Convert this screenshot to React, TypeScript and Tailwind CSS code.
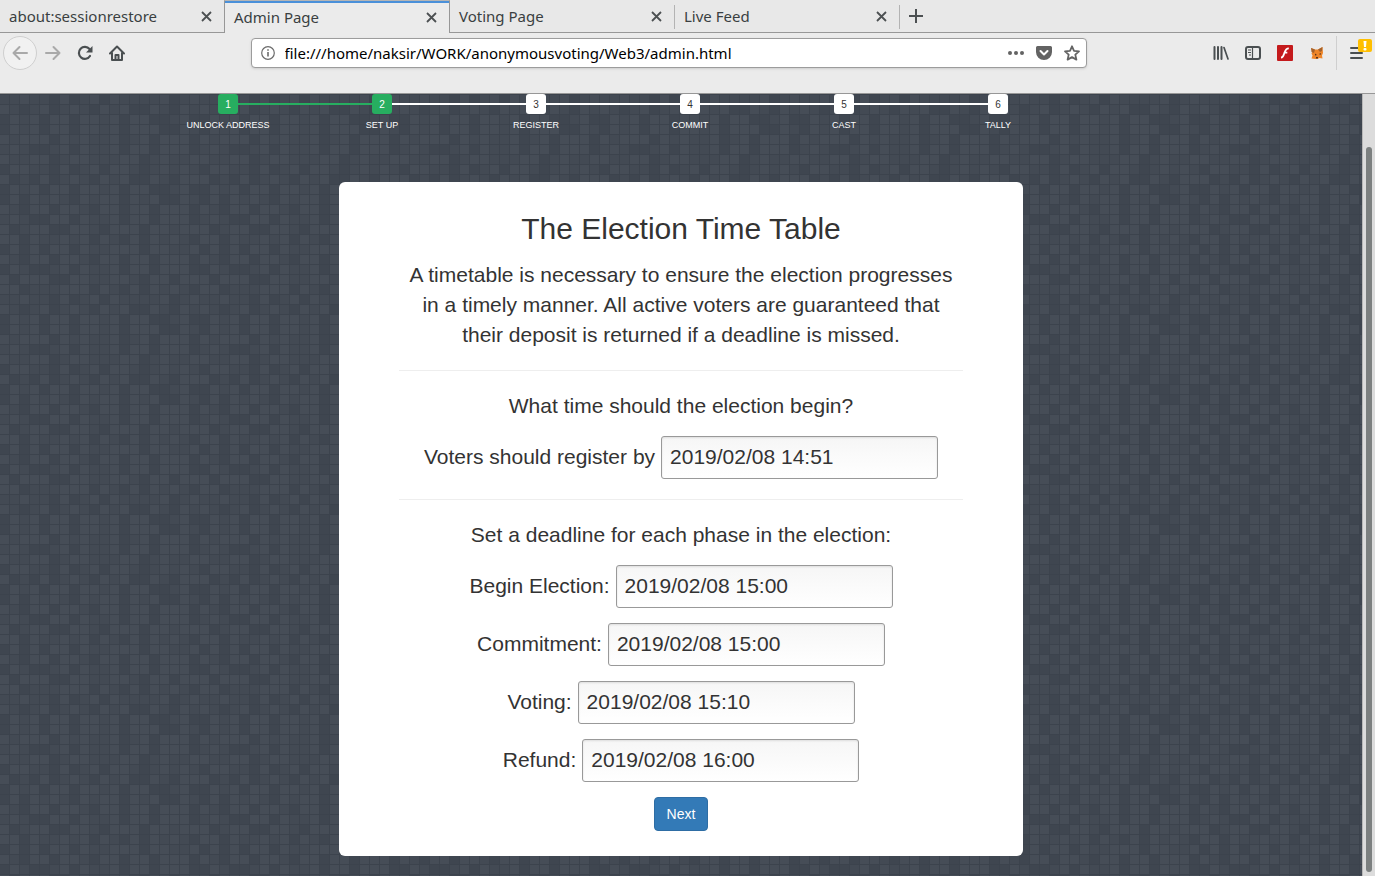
const FIELDS = [
  { id: "begin", label: "Begin Election:", value: "2019/02/08 15:00" },
  { id: "commitment", label: "Commitment:", value: "2019/02/08 15:00" },
  { id: "voting", label: "Voting:", value: "2019/02/08 15:10" },
  { id: "refund", label: "Refund:", value: "2019/02/08 16:00" },
];

const STEPS = ["Unlock Address", "Set Up", "Register", "Commit", "Cast", "Tally"];
const CURRENT_STEP = 2;

const TABS = ["about:sessionrestore", "Admin Page", "Voting Page", "Live Feed"];
const ACTIVE_TAB = 1;

// One character per 10px tile: "#" light, "+" middle, "." dark.
const MOSAIC = [
  "++#++.#.+#.#++++#.+#",
  "#+.+#.+#+.#+#..#+.#+",
  ".#+#.##.##+#.##..+#.",
  ".#+#.##.##+#.###..#+",
  "#+###.#+#++#.+#.###.",
  "+#+..+#.#++#.##.###.",
  "#++##.+##+++##.+#++#",
  ".##++.#.+#.##+.+#+#+",
  "#.+.#.+#+.#+#..#+.##",
  ".#+#.##.##+#.##..+#.",
  ".#.#+#+.#+##.#+#..#+",
  "#+.##.##+.##.##.###.",
  "+#+..##.#++#.##.###.",
  "#.+##..##+.###.##+##",
  "##.#++#+#.#+.#.#+#+.",
  ".#.#.##.#++###.##++#",
  "#+.##.##+.##.##.###.",
  ".#+..+#.#++#.##.###.",
  "#.###..##++##+.##.##",
  "##.+++###.#+.#.#+#+.",
];

const TILE_FILL: Record<string, string> = {
  "#": "#464d57",
  "+": "#434a54",
  ".": "#3f4650",
};

/** Full-bleed tile background, repeated every 200px. */
function Mosaic() {
  return (
    <svg className="absolute inset-0 h-full w-full" aria-hidden="true">
      <defs>
        <pattern id="mosaic" width="200" height="200" patternUnits="userSpaceOnUse">
          <rect width="200" height="200" fill="#3c434d" />
          {MOSAIC.map((row, y) =>
            row.split("").map((cell, x) => (
              <rect
                key={`${x}-${y}`}
                x={x * 10}
                y={y * 10 + 1}
                width="9"
                height="9"
                fill={TILE_FILL[cell]}
              />
            )),
          )}
        </pattern>
      </defs>
      <rect width="100%" height="100%" fill="url(#mosaic)" />
    </svg>
  );
}

function TabBar() {
  return (
    <div className="flex h-[33px] font-['Noto_Sans',sans-serif] text-[15px] text-[#3a3f41]">
      {TABS.map((tab, i) => (
        <div
          key={tab}
          className={
            i === ACTIVE_TAB
              ? "flex w-[226px] shrink-0 items-center border-x border-[#979797] border-t border-t-[#b5b5b5] bg-[#ebebeb] shadow-[inset_0_2px_0_#4a90d9]"
              : "flex w-[225px] shrink-0 items-center border-b border-b-[#979797] bg-[#e8e8e8] pt-px first:w-[224px]"
          }
        >
          <button type="button" className="flex-1 pl-[9px] text-left">
            {tab}
          </button>
          <button type="button" aria-label={`Close ${tab}`} className="mr-3">
            <svg width="11" height="11" viewBox="0 0 11 11">
              <path d="M1 1 10 10M10 1 1 10" stroke="#4c5052" strokeWidth="1.8" />
            </svg>
          </button>
          {i > ACTIVE_TAB && <span className="h-6 w-px bg-[#b3b3b3]" />}
        </div>
      ))}
      <div className="flex flex-1 items-center border-b border-b-[#979797] bg-[#e8e8e8] pl-[9px]">
        <button type="button" aria-label="New tab">
          <svg width="14" height="14" viewBox="0 0 14 14">
            <path d="M7 0v14M0 7h14" stroke="#4c5052" strokeWidth="2" />
          </svg>
        </button>
      </div>
    </div>
  );
}

function Toolbar() {
  return (
    <div className="flex h-[60px] items-start bg-[#ebebeb] pl-[3px] pt-[3px] text-[#4a4f51]">
      <div className="flex h-[34px] items-center">
        <button
          type="button"
          aria-label="Back"
          className="flex size-[34px] items-center justify-center rounded-full border border-[#cfcfcf] bg-[#f1f1f1] text-[#a9a9a9]"
        >
          <svg width="16" height="16" viewBox="0 0 16 16" fill="none" stroke="currentColor" strokeWidth="2" strokeLinecap="round" strokeLinejoin="round">
            <path d="M15 8H1.5M7.5 2l-6 6 6 6" />
          </svg>
        </button>
        <button type="button" aria-label="Forward" className="flex w-8 justify-center text-[#a9a9a9]">
          <svg width="16" height="16" viewBox="0 0 16 16" fill="none" stroke="currentColor" strokeWidth="2" strokeLinecap="round" strokeLinejoin="round">
            <path d="M1 8h13.5M8.5 2l6 6-6 6" />
          </svg>
        </button>
        <button type="button" aria-label="Reload" className="flex w-8 justify-center">
          <svg width="16" height="16" viewBox="0 0 16 16" fill="none">
            <path d="M12.5 4A6 6 0 1 0 13 11" stroke="currentColor" strokeWidth="2.2" strokeLinecap="round" />
            <path d="M15.500 1v6.500H9z" fill="currentColor" />
          </svg>
        </button>
        <button type="button" aria-label="Home" className="flex w-8 justify-center">
          <svg width="16" height="16" viewBox="0 0 16 16" fill="none" stroke="currentColor" strokeWidth="2" strokeLinecap="round" strokeLinejoin="round">
            <path d="m1 8.500 7-7 7 7M3 8v7h10V8" />
            <path d="M6.500 15v-5h3v5" strokeLinecap="butt" />
          </svg>
        </button>
      </div>
      <span className="flex-1" />
      <div className="mt-[2px] flex h-[30px] w-[61%] items-center rounded-[4px] border border-[#9c9c9c] bg-white pl-[9px] pr-[6px] shadow-sm">
        <svg width="14" height="14" viewBox="0 0 14 14" fill="none" stroke="#6b6b6b" aria-hidden="true">
          <circle cx="7" cy="7" r="6.3" strokeWidth="1.2" />
          <path d="M7 6v4.500M7 3.200v1.600" strokeWidth="1.6" />
        </svg>
        <input
          aria-label="Address"
          defaultValue="file:///home/naksir/WORK/anonymousvoting/Web3/admin.html"
          className="ml-[10px] min-w-0 flex-1 bg-transparent font-['Noto_Sans',sans-serif] text-[15px] text-black outline-none"
        />
        <div className="flex items-center gap-3 text-[#636363]">
          <button type="button" aria-label="Page actions">
            <svg width="16" height="16" viewBox="0 0 16 16" fill="currentColor">
              <circle cx="2" cy="8" r="2" />
              <circle cx="8" cy="8" r="2" />
              <circle cx="14" cy="8" r="2" />
            </svg>
          </button>
          <button type="button" aria-label="Save to Pocket">
            <svg width="16" height="16" viewBox="0 0 16 16">
              <path d="M1.500 1h13A1.500 1.500 0 0 1 16 2.500V7a8 8 0 0 1-16 0V2.500A1.500 1.500 0 0 1 1.500 1z" fill="currentColor" />
              <path d="M4.500 6 8 9.500 11.500 6" fill="none" stroke="#fff" strokeWidth="2" strokeLinecap="round" strokeLinejoin="round" />
            </svg>
          </button>
          <button type="button" aria-label="Bookmark this page">
            <svg width="16" height="16" viewBox="0 0 16 16" fill="none" stroke="currentColor" strokeWidth="1.8" strokeLinejoin="round">
              <path d="m8 1.300 2 4.500 5 .5-3.700 3.300 1.100 5L8 12.100l-4.400 2.500 1.100-5L1 6.300l5-.5z" />
            </svg>
          </button>
        </div>
      </div>
      <span className="flex-1" />
      <div className="flex h-[34px] items-center pl-2">
        <button type="button" aria-label="Library" className="mr-4">
          <svg width="16" height="16" viewBox="0 0 16 16" fill="none" stroke="currentColor" strokeWidth="2" strokeLinecap="round">
            <path d="M1.500 2v12M5 2v12M8.500 2v12" />
            <path d="m11 2.500 4 11.500" strokeWidth="1.7" />
          </svg>
        </button>
        <button type="button" aria-label="Sidebars" className="mr-4">
          <svg width="16" height="16" viewBox="0 0 16 16" fill="none" stroke="currentColor">
            <rect x="1" y="2" width="14" height="12" rx="2" strokeWidth="2" />
            <path d="M7.500 2v12M3 5h3M3 7.500h3M4 10h2" strokeWidth="1.2" />
          </svg>
        </button>
        <button type="button" aria-label="Flash" className="mr-4">
          <svg width="16" height="16" viewBox="0 0 16 16" fill="none">
            <rect width="16" height="16" rx="1" fill="#c41a1c" />
            <path d="M11.800 3.300C8.500 3.300 8 6 7.200 8.500 6.500 11 5.800 12.500 4 12.700M7 7.700h3.300" stroke="#fff" strokeWidth="1.8" />
          </svg>
        </button>
        <button type="button" aria-label="MetaMask">
          <svg width="16" height="16" viewBox="0 0 16 16">
            <path d="m2 3 4 1.500h3L13.500 2l.5 6-1 2.500.5 3-3-.5-2 1h-2l-4-.5 1-3-1-2 1-2z" fill="#ee8528" />
            <path d="m2 3 4 1.500L5 8 2.500 7zM9 4.500 13.500 2 13 6l-2 1z" fill="#a4612b" />
            <path d="M6 8.500 8 10l-2 .5zM10 9l2-1-.5 2zM7 12h2v1.500H7z" fill="#57301b" />
          </svg>
        </button>
        <span className="ml-[11px] h-[34px] w-px bg-[#cfcfcf]" />
        <button type="button" aria-label="Open menu" className="relative ml-[13px] mr-3">
          <svg width="13" height="14" viewBox="0 0 13 14" fill="none" stroke="currentColor" strokeWidth="2" strokeLinecap="round">
            <path d="M1 2h11M1 7h11M1 12h11" />
          </svg>
          <span className="absolute -top-[7px] left-2 flex h-[13px] w-[14px] items-center justify-center rounded-xs bg-[#ffbf00]">
            <svg width="4" height="10" viewBox="0 0 4 10" fill="#fff">
              <path d="M.5 0h3L3 6H1z" />
              <rect x="0.5" y="7" width="3" height="2.5" rx="1" />
            </svg>
          </span>
        </button>
      </div>
    </div>
  );
}

function Progress() {
  return (
    <ol className="flex pl-10">
      {STEPS.map((step, i) => {
        const done = i < CURRENT_STEP;
        const nextDone = i + 1 < CURRENT_STEP;
        return (
          <li key={step} className="w-[14%]">
            <div className="flex items-center">
              <span
                className={`h-[2px] flex-1 ${i === 0 ? "bg-transparent" : done ? "bg-[#27ae60]" : "bg-white"}`}
              />
              <span
                className={`flex size-5 items-center justify-center rounded-[3px] text-[10px] ${done ? "bg-[#27ae60] text-white" : "bg-white text-[#333]"}`}
              >
                {i + 1}
              </span>
              <span
                className={`h-[2px] flex-1 ${i === STEPS.length - 1 ? "bg-transparent" : nextDone ? "bg-[#27ae60]" : "bg-white"}`}
              />
            </div>
            <p className="mt-[5px] text-center text-[9px] leading-3 text-white uppercase">{step}</p>
          </li>
        );
      })}
    </ol>
  );
}

function TimeField({ id, label, value }: { id: string; label: string; value: string }) {
  return (
    <div className="flex items-center justify-center gap-[6px]">
      <label htmlFor={id} className="pb-[2px]">
        {label}
      </label>
      <input
        id={id}
        type="text"
        defaultValue={value}
        className="h-[43px] w-[277px] rounded-[3px] border border-[#999] bg-linear-to-b from-[#f6f6f6] to-white px-2 pb-[2px] shadow-[inset_0_1px_2px_#ddd] outline-none"
      />
    </div>
  );
}

export default function App() {
  return (
    <div className="flex min-h-screen flex-col bg-[#ebebeb]">
      <header className="border-b border-[#979797]">
        <TabBar />
        <Toolbar />
      </header>
      <div className="flex flex-1">
        <main className="relative flex-1 bg-[#3f4650] font-['Liberation_Sans',Arial,sans-serif] text-[#333]">
          <Mosaic />
          <div className="relative mx-auto max-w-[1140px] pb-5">
            <Progress />
            <form
              className="mx-auto mt-[51px] flex w-[60%] flex-col gap-[15px] rounded-[6px] bg-white px-[60px] pt-[30px] pb-[25px] text-center text-[21px] leading-[30px]"
              onSubmit={(e) => e.preventDefault()}
            >
              <h1 className="text-3xl leading-[33px]">The Election Time Table</h1>
              <p className="px-2">
                A timetable is necessary to ensure the election progresses in a timely manner. All
                active voters are guaranteed that their deposit is returned if a deadline is missed.
              </p>
              <hr className="my-[5px] border-[#eee]" />
              <p>What time should the election begin?</p>
              <TimeField id="register" label="Voters should register by" value="2019/02/08 14:51" />
              <hr className="my-[5px] border-[#eee]" />
              <p>Set a deadline for each phase in the election:</p>
              {FIELDS.map((field) => (
                <TimeField key={field.id} {...field} />
              ))}
              <button
                type="submit"
                className="h-[34px] self-center rounded-[4px] border border-[#2e6da4] bg-[#337ab7] px-3 text-sm text-white"
              >
                Next
              </button>
            </form>
          </div>
        </main>
        <div className="flex w-[13px] flex-col border-l border-[#b8b8b8] bg-[#dcdcdc] pt-[53px] pb-1">
          <span className="ml-[3px] w-[6px] flex-1 rounded-full bg-[#7c8080]" />
        </div>
      </div>
    </div>
  );
}
